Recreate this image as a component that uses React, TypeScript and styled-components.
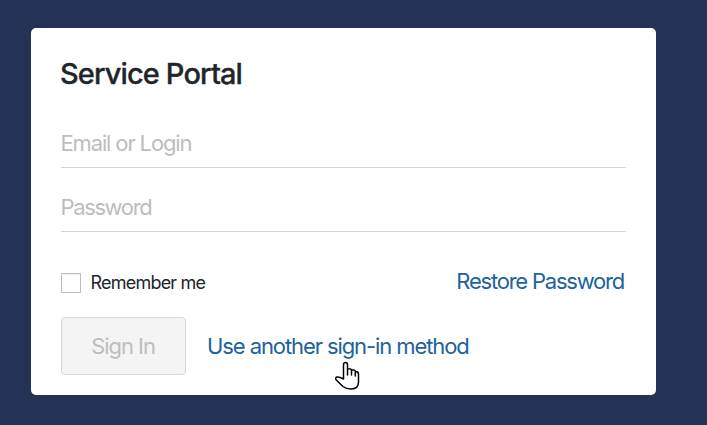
import React from "react";
import styled, { createGlobalStyle } from "styled-components";

const GlobalStyle = createGlobalStyle`
  * { box-sizing: border-box; }
  body {
    margin: 0;
    background: #243255;
    font-family: Inter, "Liberation Sans", sans-serif;
    color: #212529;
    overflow: hidden;
  }
`;

const Page = styled.main`
  position: relative;
  width: 707px;
  height: 425px;
  padding: 28px 51px 30px 31px;
`;

const Card = styled.form`
  display: flex;
  flex-direction: column;
  width: 625px;
  height: 367px;
  padding: 28px 30px 20px;
  border-radius: 5px;
  background: #fff;
`;

const Title = styled.h1`
  margin: 0 0 16px;
  font-size: 29px;
  line-height: 36px;
  font-weight: 500;
  letter-spacing: -0.88px;
  text-indent: -1px;
  -webkit-text-stroke: 0.3px currentColor;
`;

const Field = styled.input<{ $spacing: number }>`
  display: block;
  width: 100%;
  height: 60px;
  margin: 0 0 4px;
  padding: 10px 0 0;
  border: 0;
  border-bottom: 1px solid #d5d5d5;
  border-radius: 0;
  outline: none;
  background: transparent;
  font: 400 22px/28px Inter, sans-serif;
  letter-spacing: ${({ $spacing }) => $spacing}px;
  text-indent: -0.5px;
  &::placeholder { color: #bdbdbd; opacity: 1; }
`;

const Options = styled.div`
  display: flex;
  justify-content: space-between;
  height: 30px;
  margin-top: 30px;
  padding-right: 2px;
`;

const Remember = styled.label`
  display: flex;
  align-items: center;
  gap: 10px;
  height: 34px;
  font-size: 18px;
  line-height: 20px;
  letter-spacing: -0.79px;
`;

const RememberText = styled.span`
  padding-bottom: 1px;
  text-indent: -0.5px;
`;

const Checkbox = styled.input`
  appearance: none;
  width: 20px;
  height: 20px;
  margin: 0;
  border: 1px solid #bdbdbd;
  background: #fff;
  box-shadow: inset 0 1px 1px #eee;
`;

const Link = styled.a<{ $spacing: number }>`
  font-size: 22px;
  line-height: 30px;
  letter-spacing: ${({ $spacing }) => $spacing}px;
  color: #20639b;
  text-decoration: none;
  white-space: nowrap;
`;

const Actions = styled.div`
  display: flex;
  align-items: center;
  gap: 21px;
  margin-top: 21px;
`;

const SignIn = styled.button`
  width: 125px;
  height: 58px;
  padding: 0 1px 0 0;
  border: 1px solid #d7d7d7;
  border-radius: 4px;
  background: #f4f4f4;
  color: #bdbdbd;
  font: 400 22px/28px Inter, sans-serif;
  letter-spacing: -1.05px;
`;

const Cursor = styled.svg`
  position: absolute;
  left: 334px;
  top: 361px;
  pointer-events: none;
`;

export default function App() {
  return (
    <>
      <GlobalStyle />
      <Page>
        <Card>
          <Title>Service Portal</Title>
          <Field placeholder="Email or Login" $spacing={-1.14} />
          <Field type="password" placeholder="Password" $spacing={-1.38} />
          <Options>
            <Remember>
              <Checkbox type="checkbox" />
              <RememberText>Remember me</RememberText>
            </Remember>
            <Link href="#" $spacing={-1.22}>Restore Password</Link>
          </Options>
          <Actions>
            <SignIn type="button" disabled>Sign In</SignIn>
            <Link href="#" $spacing={-1.09}>Use another sign-in method</Link>
          </Actions>
        </Card>
        <Cursor width="27" height="30" viewBox="0 0 27 30" aria-hidden="true">
          <path
            d="M9.5 18V3.5Q9.5 1.5 11.5 1.5T13.5 3.5V14V8Q17.5 7.5 17.5 9V14V9Q21.3 8.5 21.3 10.5V15V10.5Q24.5 10.5 24.5 13V21Q24.5 28 17 28Q12 28 9 25.5L2.2 19Q.8 16.5 3 16Q5 15.5 9.5 18Z"
            fill="#fff"
            stroke="#000"
            strokeWidth="1.5"
            strokeLinejoin="round"
          />
        </Cursor>
      </Page>
    </>
  );
}
